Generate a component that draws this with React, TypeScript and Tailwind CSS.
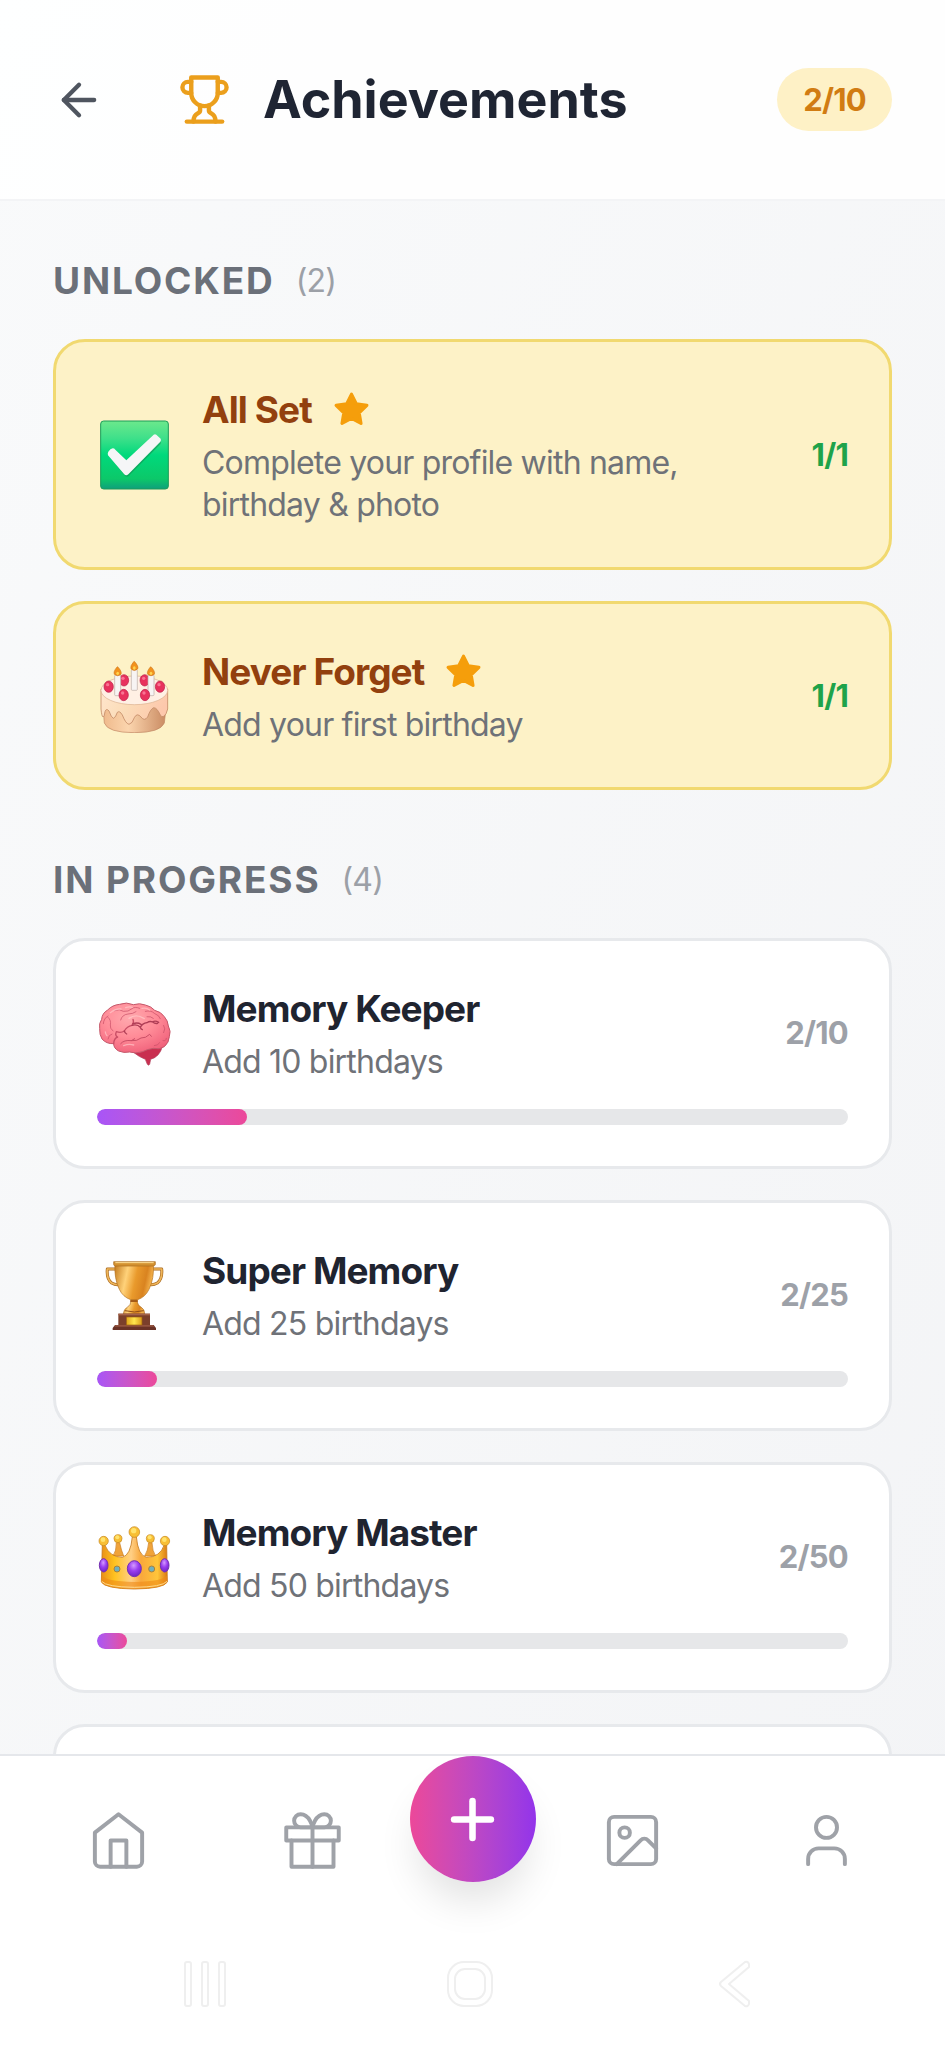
import type { ReactNode } from "react";

type IconProps = { className?: string };

function CheckEmoji({ className }: IconProps) {
  return (
    <svg viewBox="0 0 222 222" className={className} aria-hidden="true">
      <defs>
        <linearGradient id="check-bg" x1="0" y1="0" x2="0" y2="1">
          <stop offset="0" stopColor="#6ce88c" />
          <stop offset="0.25" stopColor="#3fe08a" />
          <stop offset="0.5" stopColor="#00d97c" />
          <stop offset="0.85" stopColor="#0cc869" />
          <stop offset="1" stopColor="#0f9f7c" />
        </linearGradient>
      </defs>
      <rect x="11" y="9" width="203" height="204" rx="9" fill="url(#check-bg)" stroke="#1d9c58" strokeWidth="3" />
      <path d="M36 103Q40 95 47 94Q52 94 55 98L86 129L168 55Q172 53 176 55L188 66Q190 70 187 74L92 169Q86 174 81 168L36 112Q34 108 36 103Z" transform="translate(3 5)" fill="#128a4c" opacity="0.5" />
      <path d="M34 101Q40 92 47 91Q52 91 55 95L88 127L170 50Q174 48 178 50L191 62Q193 67 190 71L94 169Q87 175 81 168L33 112Q31 106 34 101Z" fill="#f5f6f7" />
    </svg>
  );
}

const berries = [
  [35, 83],
  [81, 64],
  [143, 64],
  [189, 83],
  [80, 108],
  [144, 108],
];
const candles = [
  [62, 36, 54],
  [112, 20, 54],
  [162, 36, 54],
];

function CakeEmoji({ className }: IconProps) {
  return (
    <svg viewBox="0 0 222 222" className={className} aria-hidden="true">
      <defs>
        <linearGradient id="cake-body" x1="0" y1="0" x2="1" y2="0">
          <stop offset="0" stopColor="#efb98b" />
          <stop offset="0.4" stopColor="#fbd5ae" />
          <stop offset="1" stopColor="#c98a61" />
        </linearGradient>
        <linearGradient id="cake-icing" x1="0" y1="0" x2="1" y2="0.3">
          <stop offset="0" stopColor="#ffe6cd" />
          <stop offset="0.5" stopColor="#fbdcb8" />
          <stop offset="1" stopColor="#fdc8ac" />
        </linearGradient>
      </defs>
      <path d="M17 130L22 192Q32 221 112 221Q190 221 202 192L209 130Z" fill="url(#cake-body)" stroke="#bf8562" strokeWidth="2" />
      <path d="M12 90V150Q14 172 18 174Q22 174 24 158Q28 146 36 156Q43 176 49 178Q56 176 61 160Q68 154 76 168Q86 194 96 196Q106 194 112 176Q120 160 132 174Q142 188 152 174Q160 150 170 146Q180 146 190 168Q194 176 200 172Q208 168 212 150V90Z" fill="url(#cake-icing)" stroke="#c48b68" strokeWidth="2.5" />
      <ellipse cx="112" cy="94" rx="100" ry="43" fill="#fff0e4" stroke="#dbb08f" strokeWidth="2" />
      {berries.slice(0, 4).map(([x, y]) => (
        <ellipse key={x} cx={x} cy={y} rx="14" ry="17" fill="#e8315d" stroke="#b81b46" strokeWidth="2" />
      ))}
      {candles.map(([x, y, h]) => (
        <g key={x}>
          <rect x={x - 9} y={y + 12} width="18" height={h + 8} rx="3" fill="#f7f4f3" stroke="#b9aaa5" strokeWidth="2" />
          <path d={`M${x - 2} ${y - 12}Q${x - 14} ${y + 2} ${x - 10} ${y + 10}Q${x} ${y + 19} ${x + 10} ${y + 10}Q${x + 14} ${y + 2} ${x} ${y - 13}Z`} fill="#f2921d" stroke="#c56d16" strokeWidth="1.5" />
          <ellipse cx={x} cy={y + 7} rx="4" ry="5" fill="#ffd34d" />
        </g>
      ))}
      {berries.slice(4).map(([x, y]) => (
        <ellipse key={x} cx={x} cy={y} rx="14" ry="17" fill="#e8315d" stroke="#b81b46" strokeWidth="2" />
      ))}
      {berries.map(([x, y]) => (
        <ellipse key={x} cx={x - 3} cy={y - 6} rx="5" ry="5" fill="#ff8ba5" opacity="0.75" />
      ))}
    </svg>
  );
}

function BrainEmoji({ className }: IconProps) {
  return (
    <svg viewBox="0 0 222 222" className={className} aria-hidden="true">
      <defs>
        <radialGradient id="brain-fill" cx="0.42" cy="0.3" r="0.75">
          <stop offset="0" stopColor="#ffa9ae" />
          <stop offset="0.5" stopColor="#ff8c98" />
          <stop offset="1" stopColor="#f0607a" />
        </radialGradient>
      </defs>
      <path d="M108 168Q128 184 145 190L151 205Q155 210 158 205L161 190Q188 182 196 152Z" fill="#c92f50" stroke="#b0405a" strokeWidth="2" />
      <path d="M50 143Q28 144 15 129Q7 116 8 98Q5 82 14 70Q15 52 32 42Q46 27 68 25Q88 17 109 26Q128 20 145 27Q163 31 173 43Q192 47 202 62Q213 74 214 90Q223 106 217 122Q216 140 202 152Q187 162 169 157Q150 160 137 167Q116 174 98 168Q80 172 65 165Q50 157 50 143Z" fill="url(#brain-fill)" stroke="#c4586a" strokeWidth="3" />
      <g fill="none" stroke="#c94f66" strokeWidth="4" strokeLinecap="round" strokeLinejoin="round">
        <path d="M50 143Q51 127 62 123Q53 119 58 107Q72 112 82 105Q90 91 105 88Q112 80 108 70" />
        <path d="M82 105Q84 112 89 114M105 88Q122 84 130 94Q131 99 136 101M130 94Q136 82 150 80Q158 74 167 78Q174 72 185 79M167 78Q174 84 182 82M108 83Q122 78 132 85" stroke="#af3e56" />
        <path d="M71 143Q81 131 103 134Q120 136 132 126Q146 127 158 115L163 121M103 134L113 128" strokeWidth="3" />
        <path d="M33 64Q43 72 40 87Q38 97 48 105M19 83Q20 67 33 60M53 44Q68 37 79 46Q94 48 105 38Q113 31 128 37M71 72Q75 56 93 54Q108 54 117 47M145 46Q162 42 172 52Q187 58 190 68M150 62Q161 60 169 67M200 88Q207 98 200 110M198 134Q207 137 208 127M172 149Q184 149 188 140M33 129Q35 116 45 114" strokeWidth="3" opacity="0.7" />
      </g>
      <g fill="none" stroke="#ffd1d0" strokeWidth="4" strokeLinecap="round" opacity="0.6">
        <path d="M40 50Q54 38 72 39M86 35Q97 31 106 34M135 37Q149 34 158 42M96 67Q118 52 142 68M25 108Q26 115 30 119M80 149Q96 142 110 147" />
      </g>
    </svg>
  );
}

function TrophyEmoji({ className }: IconProps) {
  return (
    <svg viewBox="0 0 222 222" className={className} aria-hidden="true">
      <defs>
        <linearGradient id="cup-fill" x1="0" y1="0" x2="1" y2="0.2">
          <stop offset="0" stopColor="#c47a1d" />
          <stop offset="0.35" stopColor="#ffd27a" />
          <stop offset="0.6" stopColor="#e99a2c" />
          <stop offset="0.85" stopColor="#d98320" />
          <stop offset="1" stopColor="#f2b04b" />
        </linearGradient>
        <linearGradient id="plate-fill" x1="0" y1="0" x2="1" y2="0">
          <stop offset="0" stopColor="#e0a51b" />
          <stop offset="0.5" stopColor="#ffe64f" />
          <stop offset="1" stopColor="#d99a18" />
        </linearGradient>
      </defs>
      <g fill="none" strokeLinejoin="round">
        <path d="M58 33H31Q28 62 44 75Q56 82 70 79M167 33H194Q197 62 181 75Q169 82 155 79" stroke="#a9691f" strokeWidth="9" />
        <path d="M58 33H31Q28 62 44 75Q56 82 70 79M167 33H194Q197 62 181 75Q169 82 155 79" stroke="#efb65a" strokeWidth="5" />
      </g>
      <path d="M103 124H120Q121 143 133 148Q143 154 143 168H79Q80 153 91 148Q102 142 103 124Z" fill="url(#cup-fill)" stroke="#a9691f" strokeWidth="2" />
      <path d="M100 125H122V132H100Z" fill="#a45a17" />
      <path d="M54 16H169Q172 62 156 94Q145 117 122 125H101Q78 117 67 94Q51 62 54 16Z" fill="url(#cup-fill)" stroke="#b4701d" strokeWidth="2" />
      <path d="M50 11H175V19Q174 24 168 24H56Q50 24 50 19Z" fill="#d3912f" stroke="#a9691f" strokeWidth="2" />
      <path d="M55 14H170" stroke="#ffe09a" strokeWidth="3" />
      <path d="M84 158Q112 166 140 158" fill="none" stroke="#8f4e17" strokeWidth="3" />
      <path d="M64 167H159V201H64Z" fill="#7b3f2b" />
      <path d="M64 167H159V172H64Z" fill="#a5634a" />
      <path d="M54 201H170L177 210V216H47V210Z" fill="#6a3226" />
      <path d="M56 201H168L172 206H52Z" fill="#93533e" />
      <rect x="88" y="177" width="47" height="24" fill="url(#plate-fill)" stroke="#9c6012" strokeWidth="2" />
    </svg>
  );
}

function CrownEmoji({ className }: IconProps) {
  return (
    <svg viewBox="0 0 222 222" className={className} aria-hidden="true">
      <defs>
        <linearGradient id="crown-fill" x1="0" y1="0" x2="1" y2="0">
          <stop offset="0" stopColor="#e88f16" />
          <stop offset="0.2" stopColor="#ffc21f" />
          <stop offset="0.45" stopColor="#ffcf85" />
          <stop offset="0.6" stopColor="#f9a83c" />
          <stop offset="0.85" stopColor="#ffc53a" />
          <stop offset="1" stopColor="#d97a10" />
        </linearGradient>
        <radialGradient id="gem-fill" cx="0.45" cy="0.3" r="0.7">
          <stop offset="0" stopColor="#d49aff" />
          <stop offset="0.5" stopColor="#9a3df0" />
          <stop offset="1" stopColor="#6e25c4" />
        </radialGradient>
      </defs>
      <path d="M58 68H68Q73 92 80 108H48Q58 94 58 68ZM155 68H165Q166 94 176 108H143Q153 92 155 68Z" fill="#f0a33a" stroke="#c97a1a" strokeWidth="2" />
      <path d="M106 50H118Q123 106 148 112Q190 112 202 74H209L211 186Q200 206 112 207Q24 206 13 186L16 74H23Q38 112 76 112Q101 106 106 50Z" fill="url(#crown-fill)" stroke="#c5781a" strokeWidth="2.5" />
      <path d="M14 165Q24 184 112 186Q200 184 210 165L211 186Q200 206 112 207Q24 206 13 186Z" fill="#ee8a18" opacity="0.6" />
      <path d="M14 184Q28 201 112 202Q196 201 210 184" fill="none" stroke="#ffd98a" strokeWidth="3" />
      {[
        [20, 63, 14],
        [63, 56, 12],
        [112, 36, 16],
        [160, 56, 12],
        [204, 63, 14],
      ].map(([x, y, r]) => (
        <g key={x}>
          <circle cx={x} cy={y} r={r} fill="#f8bf34" stroke="#c5851c" strokeWidth="2" />
          <circle cx={x - 2} cy={y - 4} r={r / 2} fill="#ffe36e" />
        </g>
      ))}
      {[
        [20, 136, 13, 20],
        [112, 146, 21, 24],
        [203, 136, 13, 20],
      ].map(([x, y, rx, ry]) => (
        <ellipse key={x} cx={x} cy={y} rx={rx} ry={ry} fill="url(#gem-fill)" stroke="#7431b0" strokeWidth="3" />
      ))}
      {[60, 164].map((x) => (
        <circle key={x} cx={x} cy="147" r="9" fill="#6fb0bd" stroke="#a7813c" strokeWidth="3" />
      ))}
    </svg>
  );
}

function Stroke({ size, width, children }: { size: string; width: number; children: ReactNode }) {
  return (
    <svg
      viewBox="0 0 24 24"
      className={size}
      fill="none"
      stroke="currentColor"
      strokeWidth={width}
      strokeLinecap="round"
      strokeLinejoin="round"
      aria-hidden="true"
    >
      {children}
    </svg>
  );
}

type Achievement = {
  name: string;
  detail: string;
  have: number;
  need: number;
  Icon: (p: IconProps) => ReactNode;
};

const unlocked: Achievement[] = [
  { name: "All Set", detail: "Complete your profile with name, birthday & photo", have: 1, need: 1, Icon: CheckEmoji },
  { name: "Never Forget", detail: "Add your first birthday", have: 1, need: 1, Icon: CakeEmoji },
];

const inProgress: Achievement[] = [
  { name: "Memory Keeper", detail: "Add 10 birthdays", have: 2, need: 10, Icon: BrainEmoji },
  { name: "Super Memory", detail: "Add 25 birthdays", have: 2, need: 25, Icon: TrophyEmoji },
  { name: "Memory Master", detail: "Add 50 birthdays", have: 2, need: 50, Icon: CrownEmoji },
];

function Card({ item, done }: { item: Achievement; done: boolean }) {
  const { name, detail, have, need, Icon } = item;
  return (
    <li
      className={
        done
          ? "rounded-[32px] border-3 border-[#f1d970] bg-[#fdf2c7] p-[41px]"
          : "rounded-[32px] border-3 border-[#e7e9ec] bg-white p-[41px]"
      }
    >
      <div className="flex items-center gap-[31px]">
        <Icon className="size-[74px] shrink-0" />
        <div className="flex min-w-0 flex-1 flex-col gap-[6px]">
          <div className="flex items-center gap-[21px]">
            <h3
              className={
                done
                  ? "text-[37px] leading-[53px] font-bold tracking-tight text-[#92400e]"
                  : "text-[37px] leading-[53px] font-bold tracking-tight text-[#1f2430]"
              }
            >
              {name}
            </h3>
            {done && (
              <svg viewBox="0 0 24 24" className="size-[37px] fill-[#f59e0b] stroke-[#f59e0b] stroke-2" strokeLinejoin="round" aria-hidden="true">
                <path d="M12 2l3.09 6.26L22 9.27l-5 4.87 1.18 6.88L12 17.77l-6.18 3.25L7 14.14 2 9.27l6.91-1.01L12 2z" />
              </svg>
            )}
          </div>
          <p className="max-w-[520px] text-[32px] leading-[42px] tracking-tight text-[#6f7278]">{detail}</p>
        </div>
        <span
          className={
            done
              ? "text-[31px] leading-[42px] font-bold tracking-tight text-[#1fa34a]"
              : "text-[31px] leading-[42px] font-bold tracking-tight text-[#9da1a8]"
          }
        >
          {have}/{need}
        </span>
      </div>
      {!done && (
        <div
          role="progressbar"
          aria-label={name}
          aria-valuenow={have}
          aria-valuemin={0}
          aria-valuemax={need}
          className="mt-[26px] h-4 overflow-hidden rounded-full bg-[#e6e7e9]"
        >
          <div
            className="h-full rounded-full bg-linear-to-r from-[#a855f7] to-[#ec4899]"
            style={{ width: `${(have / need) * 100}%` }}
          />
        </div>
      )}
    </li>
  );
}

function Section({ title, count, children }: { title: string; count: number; children: ReactNode }) {
  return (
    <section className="flex flex-col gap-8">
      <h2 className="flex items-center gap-[21px] text-[37px] leading-[53px] font-bold tracking-wider text-[#6b7079] uppercase">
        {title}
        <span className="text-[32px] font-normal tracking-tight text-[#9ca0a7]">({count})</span>
      </h2>
      <ul className="flex flex-col gap-[31px]">{children}</ul>
    </section>
  );
}

const tab = "flex h-full flex-1 items-center justify-center text-[#9fa2a8]";

export default function App() {
  return (
    <div className="flex h-screen flex-col bg-linear-to-br from-[#f9fafb] to-[#f3f4f6] font-['Inter',sans-serif]">
      <header className="flex items-center border-b-2 border-[#f3f4f6] bg-white/90 px-[53px] py-[68px]">
        <button type="button" aria-label="Back" className="mr-[73px] text-[#4f555f]">
          <Stroke size="size-[52px]" width={2}>
            <path d="m12 19-7-7 7-7" />
            <path d="M19 12H5" />
          </Stroke>
        </button>
        <div className="flex flex-1 items-center gap-8">
          <span className="text-[#eb9f1c]">
            <Stroke size="size-[53px]" width={2}>
              <path d="M6 9H4.5a2.5 2.5 0 0 1 0-5H6" />
              <path d="M18 9h1.5a2.5 2.5 0 0 0 0-5H18" />
              <path d="M4 22h16" />
              <path d="M10 14.66V17c0 .55-.47.98-.97 1.21C7.85 18.75 7 20.24 7 22" />
              <path d="M14 14.66V17c0 .55.47.98.97 1.21C16.15 18.75 17 20.24 17 22" />
              <path d="M18 2H6v7a6 6 0 0 0 12 0V2Z" />
            </Stroke>
          </span>
          <h1 className="text-[52px] leading-[63px] font-bold text-[#1f2533]">Achievements</h1>
        </div>
        <span className="rounded-full bg-[#fef1c6] px-[26px] text-[31px] leading-[63px] font-bold tracking-tight text-[#d17c12]">2/10</span>
      </header>

      <main className="flex min-h-0 flex-1 flex-col gap-[63px] overflow-hidden px-[53px] pt-[53px]">
        <Section title="Unlocked" count={2}>
          {unlocked.map((a) => (
            <Card key={a.name} item={a} done />
          ))}
        </Section>
        <Section title="In Progress" count={4}>
          {inProgress.map((a) => (
            <Card key={a.name} item={a} done={false} />
          ))}
          <li className="h-[231px] rounded-[32px] border-3 border-[#e7e9ec] bg-white" />
        </Section>
      </main>

      <footer className="shrink-0 border-t-2 border-[#e5e7eb] bg-white">
        <nav className="flex h-[168px] items-start px-[21px]">
          <a href="#home" aria-label="Home" className={tab}>
            <Stroke size="size-[63px]" width={1.5}>
              <path d="m3 9 9-7 9 7v11a2 2 0 0 1-2 2H5a2 2 0 0 1-2-2z" />
              <path d="M9 22V12h6v10" />
            </Stroke>
          </a>
          <a href="#gifts" aria-label="Gifts" className={tab}>
            <Stroke size="size-[63px]" width={1.5}>
              <path d="M20 12v10H4V12" />
              <path d="M2 7h20v5H2z" />
              <path d="M12 22V7" />
              <path d="M12 7H7.5a2.5 2.5 0 0 1 0-5C11 2 12 7 12 7z" />
              <path d="M12 7h4.5a2.5 2.5 0 0 0 0-5C13 2 12 7 12 7z" />
            </Stroke>
          </a>
          <button
            type="button"
            aria-label="Add"
            className="flex size-[126px] items-center justify-center rounded-full bg-linear-to-r from-[#ec4899] to-[#9333ea] text-white shadow-[0_26px_40px_-8px_rgba(0,0,0,0.12)]"
          >
            <Stroke size="size-[63px]" width={2.5}>
              <path d="M5 12h14" />
              <path d="M12 5v14" />
            </Stroke>
          </button>
          <a href="#photos" aria-label="Photos" className={tab}>
            <Stroke size="size-[63px]" width={1.5}>
              <rect width="18" height="18" x="3" y="3" rx="2" />
              <circle cx="9" cy="9" r="2" />
              <path d="m21 15-3.086-3.086a2 2 0 0 0-2.828 0L6 21" />
            </Stroke>
          </a>
          <a href="#profile" aria-label="Profile" className={tab}>
            <Stroke size="size-[63px]" width={1.5}>
              <circle cx="12" cy="7" r="4" />
              <path d="M19 21v-2a4 4 0 0 0-4-4H9a4 4 0 0 0-4 4v2" />
            </Stroke>
          </a>
        </nav>
        <div className="grid h-[124px] grid-cols-3 place-items-center pr-[78px] pb-1 pl-[73px] text-[#efefef]">
          <button type="button" aria-label="Recent apps">
            <svg viewBox="0 0 48 48" className="size-12" fill="none" stroke="currentColor" strokeWidth="2">
              <rect x="4" y="2" width="6" height="44" rx="2" />
              <rect x="21" y="2" width="6" height="44" rx="2" />
              <rect x="38" y="2" width="6" height="44" rx="2" />
            </svg>
          </button>
          <button type="button" aria-label="Home screen">
            <svg viewBox="0 0 48 48" className="size-12" fill="none" stroke="currentColor" strokeWidth="2">
              <rect x="2" y="2" width="44" height="44" rx="16" />
              <rect x="9" y="9" width="30" height="30" rx="10" />
            </svg>
          </button>
          <button type="button" aria-label="Go back">
            <svg viewBox="0 0 48 48" className="size-12" fill="none" stroke="currentColor" strokeWidth="2" strokeLinejoin="round">
              <path d="M34 2Q37 1 38 4V7L18 24L38 41V44Q37 47 34 46L10 26Q8 24 10 22Z" />
            </svg>
          </button>
        </div>
      </footer>
    </div>
  );
}
